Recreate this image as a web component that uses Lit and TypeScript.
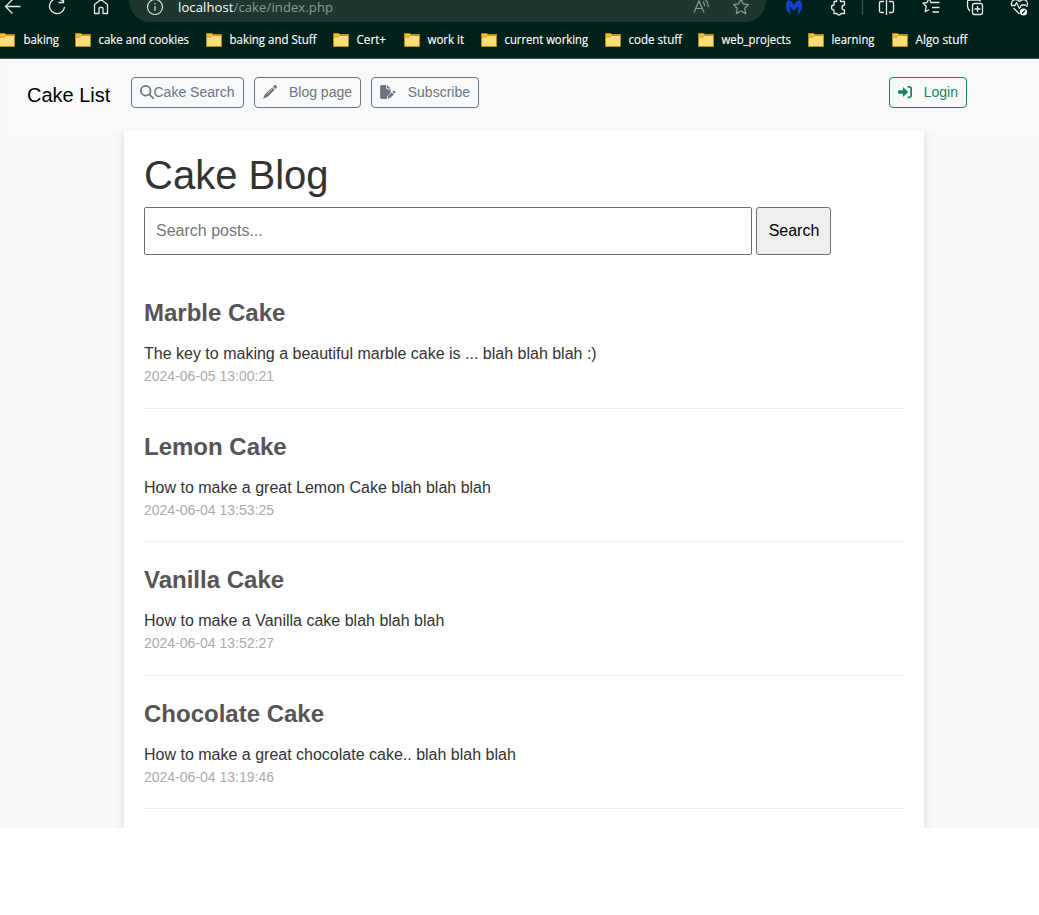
import { LitElement, html, css } from "lit";
import { customElement } from "lit/decorators.js";

// Name, left edge of the folder icon, width of the label
const bookmarks: [string, number, number][] = [
  ["baking", 0, 35.5],
  ["cake and cookies", 75, 90.5],
  ["baking and Stuff", 206, 87],
  ["Cert+", 333, 29.5],
  ["work it", 404, 36.5],
  ["current working", 481, 83.5],
  ["code stuff", 605, 53.5],
  ["web_projects", 698, 69.5],
  ["learning", 808, 43],
  ["Algo stuff", 892, 52],
];

const posts = [
  ["Marble Cake", "The key to making a beautiful marble cake is ... blah blah blah :)", "2024-06-05 13:00:21"],
  ["Lemon Cake", "How to make a great Lemon Cake blah blah blah", "2024-06-04 13:53:25"],
  ["Vanilla Cake", "How to make a Vanilla cake blah blah blah", "2024-06-04 13:52:27"],
  ["Chocolate Cake", "How to make a great chocolate cake.. blah blah blah", "2024-06-04 13:19:46"],
];

@customElement("browser-chrome")
class BrowserChrome extends LitElement {
  static styles = css`
    :host { display: block; height: 59px; box-sizing: border-box; background: #00201a; border-bottom: 1px solid #3f5952; color: #fff; font-family: "Open Sans", "Noto Sans", sans-serif; }
    .toolbar { display: grid; grid-template-columns: 129px 637px 273px; height: 22px; }
    .address { background: #1d3630; border-radius: 0 0 20px 20px / 0 0 22px 22px; display: grid; grid-template-columns: 49px 1fr 80px; }
    .url { font-size: 13px; line-height: 15px; color: #8d9b97; white-space: nowrap; letter-spacing: 0.12px; }
    .host { color: #fff; }
    svg { display: block; }
    .bookmarks { display: flex; height: 36px; align-items: center; }
    .bookmark { display: flex; align-items: center; flex: none; }
    .folder { flex: none; }
    .label { display: block; margin-left: 6px; overflow: visible; }
    .label text { font-size: 12px; fill: #fff; stroke: #fff; stroke-width: 0.15px; }
  `;
  render() {
    return html`
      <div class="toolbar">
        <svg width="129" height="22" fill="none" stroke="#e6ebea" stroke-width="1.3">
          <path d="M20.500 6.500H6M12.500 -.5l-7 7 7 7" />
          <path d="M62.500 1A7.500 7.500 0 1 0 64.500 7M63.500 -2v4.500h-5" />
          <path d="M94.500 13.500V4.500l6.500-5 6.500 5v9h-4.500V8.500q0-1-1-1h-2q-1 0-1 1v5z" stroke-linejoin="round" />
        </svg>
        <div class="address">
          <svg width="49" height="22" fill="none" stroke="#d9dfdd" stroke-width="1.2"><circle cx="26" cy="7" r="7.500" /><path d="M26 6v5M26 3v1.500" /></svg>
          <div class="url"><span class="host">localhost</span>/cake/index.php</div>
          <svg width="80" height="22" fill="none" stroke="#8d9b97" stroke-width="1.2">
            <path d="M8 12.500L13 1l5 11.500M9.800 8.500h6.500M17 2q2 2 1.500 4M19.500 0q3.500 3 2.500 7" />
            <path d="M55-1l2.300 4.900 5.200.7-3.800 3.700 1 5.300-4.700-2.600-4.700 2.600 1-5.300-3.800-3.700 5.200-.7z" stroke-linejoin="round" />
          </svg>
        </div>
        <svg width="273" height="22" viewBox="766 0 273 22" fill="none" stroke="#e6ebea" stroke-width="1.3" stroke-linejoin="round">
          <path fill="#1440d0" stroke="none" d="M788 0q3 0 4.500 2.500l1.500 2.500 1.500-2.500Q797 0 800 0q2.500 3 2 7.500-.5 4.500-5 7 2-4 1-8l-4 4.500-4-4.500q-1 4 1 8-4.500-2.500-5-7Q785.500 3 788 0z" />
          <path d="M834 1.500h2.500q0-2.500 2-2.500t2 2.500h4v3.500q-2.500 0-2.500 2.500t2.500 2.500v3.500h-3.500q0 1.500-2 1.500t-2-1.500H834V10q-2.500 0-2.500-2.500T834 5z" />
          <path stroke="#3b514b" d="M862.500 0v15" />
          <path d="M884 1.500h-3q-1.500 0-1.500 1.500v8q0 1.500 1.500 1.500h3M889 1.500h3q1.500 0 1.500 1.500v8q0 1.500-1.500 1.500h-3M886.500-1v16" />
          <path d="M934 2.500h-3l-2-4-2 4-4 .6 3.200 3.200-1 5.500 4-2.300M933.500 2.500h6M932 7.500h7.500M932.500 12h6.500" />
          <rect x="972.500" y="3.500" width="10" height="11" rx="2" /><path d="M970 11q-2.500-2-2.500-5V2q0-2 2-2h9q1.500 0 2 1.500M977.500 6v6M974.500 9h6" />
          <path d="M1013.500 8l6 6M1026.500 7q2-3 0-6-3-3-7 .5-4-3.500-7-.5-1.500 2-1 4M1011 5.500h4l1.500-3 3 6 2-3.500h4.500" />
          <circle cx="1023.500" cy="12" r="3.600" fill="#fff" stroke="none" /><path stroke="#00201a" d="M1022 13.500l3-3" />
        </svg>
      </div>
      <div class="bookmarks">
        ${bookmarks.map(([name, x, w], i) => html`<div class="bookmark" style="width:${(i < 9 ? bookmarks[i + 1][1] : 1039) - x}px">
          <svg class="folder" width="16" height="14" viewBox="${i === 0 ? 1 : 0} 0 16 14"><path d="M.5 .5h5l1.500 1h8.500v12h-15z" fill="#ffdc7c" stroke="#b98a12" /><path d="M1 1h4.500v2L5 3.500H1z" fill="#f3bd25" /><path d="M1 4h4l1.500-1.500H15" fill="none" stroke="#c99614" /></svg>
          <svg class="label" width=${w + 4} height="20"><text x="1.500" y="14.300" textLength=${w} lengthAdjust="spacingAndGlyphs">${name}</text></svg>
        </div>`)}
      </div>`;
  }
}

@customElement("app-root")
class AppRoot extends LitElement {
  static styles = css`
    :host { display: block; height: 915px; background: #fff; font-family: "Liberation Sans", Arial, sans-serif; color: #333; overflow: hidden; }
    * { box-sizing: border-box; }
    .page { height: 769px; background: #f8f8f8; overflow: hidden; display: flex; flex-direction: column; }
    nav { height: 72px; flex: none; display: flex; align-items: flex-start; background: #f8f9fb; margin: 0 5px 0 14px; padding: 18px 67px 0 13px; position: relative; z-index: 1; }
    .brand { font-size: 20px; line-height: 30px; color: #000; padding-top: 3px; width: 104px; white-space: nowrap; }
    .btn { height: 31px; border: 1px solid #6c757d; border-radius: 4px; color: #6c757d; font-size: 14px; line-height: 21px; padding: 4px 8px; display: flex; align-items: center; white-space: nowrap; margin-right: 10px; }
    .btn svg { flex: none; fill: currentColor; margin-top: -1px; }
    .btn.login { color: #198754; border-color: #198754; margin: 0 0 0 auto; }
    .s { width: 113px; } .b { width: 107px; } .u { width: 108px; } .login { width: 78px; }
    .s svg { margin-right: -0.5px; }
    .b svg, .u svg, .login svg { margin-left: -0.5px; margin-right: auto; }
    .container { width: 800px; flex: 1; margin-left: 124px; background: #fff; padding: 20px; box-shadow: 0 0 10px rgba(0,0,0,.1); }
    h1 { font-size: 40px; font-weight: 400; line-height: 48px; margin: 0 0 8px; }
    form { display: flex; gap: 4px; height: 48px; margin-bottom: 40px; }
    input { width: 608px; border: 1px solid #6f6f6f; border-radius: 2px; padding: 0 11px; font: 16px "Liberation Sans", Arial, sans-serif; background: #fff; }
    input::placeholder { color: #757575; opacity: 1; }
    button { width: 75px; border: 1px solid #6f6f6f; border-radius: 3px; background: #efefef; color: #000; font: 16px "Liberation Sans", Arial, sans-serif; padding: 0 0 0 1px; }
    .post { height: 133.500px; }
    .body { height: 113.500px; border-bottom: 1px solid #eee; }
    h2 { font-size: 24px; line-height: 29px; margin: 0 0 15px; padding-top: 3px; color: #555; }
    p { font-size: 16px; line-height: 24px; margin: 0; height: 24px; }
    time { display: block; font-size: 14px; line-height: 21px; color: #aaa; }
  `;
  render() {
    return html`
      <browser-chrome></browser-chrome>
      <div class="page">
        <nav>
          <div class="brand">Cake List</div>
          <div class="btn s"><svg width="14" height="14" viewBox="0 0 512 512"><path d="M416 208c0 45.900-14.900 88.300-40 122.700L502.600 457.400c12.500 12.500 12.500 32.800 0 45.300s-32.800 12.500-45.300 0L330.700 376A208 208 0 1 1 416 208zM208 352a144 144 0 1 0 0-288 144 144 0 1 0 0 288z" /></svg>Cake Search</div>
          <div class="btn b"><svg width="14" height="14" viewBox="0 0 512 512"><path d="M410 18c22-22 52-22 71 0l14 14c22 21 22 50 0 71l-47 47-86-86zM340 87l86 86-245 246c-8 8-18 15-29 18L22 490c-8 2-16-5-12-13l48-119c4-11 10-20 18-29z" /><path d="M150 330l200-200" stroke="#f8f9fb" stroke-width="20" /></svg>Blog page</div>
          <div class="btn u"><svg width="16" height="14" viewBox="0 0 576 512"><path d="M0 64C0 29 29 0 64 0h160v128c0 18 14 32 32 32h128v126L280 390c-9 9-15 20-18 32l-19 75c-1 5-2 10-1 15H64c-35 0-64-29-64-64zM384 128H256V0zM550 235c15 16 15 41 0 57l-30 29-71-71 30-29c15-16 41-16 56 0zM303 396l124-124 71 71-124 124c-4 4-9 7-15 9l-60 15c-6 1-12 0-16-4s-6-10-4-16l15-60c1-6 4-11 9-15z" /></svg>Subscribe</div>
          <div class="btn login"><svg width="14" height="14" viewBox="0 0 512 512"><path d="M218 409L353 274c10-10 10-27 0-37L218 103c-18-17-42-5-42 17v72H32c-18 0-32 14-32 32v64c0 18 14 32 32 32h144v72c0 22 26 34 42 17zM352 416h64c18 0 32-14 32-32V128c0-18-14-32-32-32h-64V32h64c53 0 96 43 96 96v256c0 53-43 96-96 96h-64z" /></svg>Login</div>
        </nav>
        <div class="container">
          <h1>Cake Blog</h1>
          <form><input type="text" placeholder="Search posts..." /><button type="button">Search</button></form>
          ${posts.map(([title, text, date]) => html`<article class="post"><div class="body"><h2>${title}</h2><p>${text}</p><time>${date}</time></div></article>`)}
        </div>
      </div>`;
  }
}
